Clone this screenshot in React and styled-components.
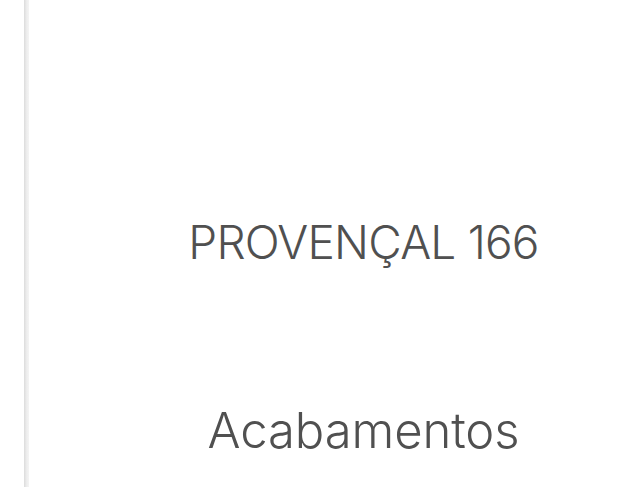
import React from 'react';
import styled, { createGlobalStyle } from 'styled-components';

const GlobalStyle = createGlobalStyle`
  html, body {
    margin: 0;
    padding: 0;
    background: #ffffff;
  }
  body {
    font-family: "Inter", "Liberation Sans", sans-serif;
  }
`;

const Page = styled.div`
  width: 640px;
  height: 487px;
  display: flex;
  background: #fff;
  overflow: hidden;
`;

const Rule = styled.div`
  width: 5px;
  margin-left: 24px;
  background: linear-gradient(to right, #dcdcdc, #ececec, #f4f4f4);
`;

const Panel = styled.div`
  flex: 1;
  display: flex;
  flex-direction: column;
  align-items: center;
  padding-left: 58px;
`;

const Title = styled.h2`
  margin: 212px 0 0;
  font-family: "Inter", "Liberation Sans", sans-serif;
  font-weight: 300;
  font-size: 46px;
  letter-spacing: -0.8px;
  color: #505050;
  line-height: 60px;
`;

const Section = styled.h3`
  margin: 129px 0 0;
  font-family: "Inter", "Liberation Sans", sans-serif;
  font-weight: 300;
  font-size: 49px;
  letter-spacing: -0.1px;
  color: #505050;
  line-height: 60px;
`;

export default function App() {
  return (
    <>
      <GlobalStyle />
      <Page>
        <Rule />
        <Panel>
          <Title>PROVENÇAL 166</Title>
          <Section>Acabamentos</Section>
        </Panel>
      </Page>
    </>
  );
}
